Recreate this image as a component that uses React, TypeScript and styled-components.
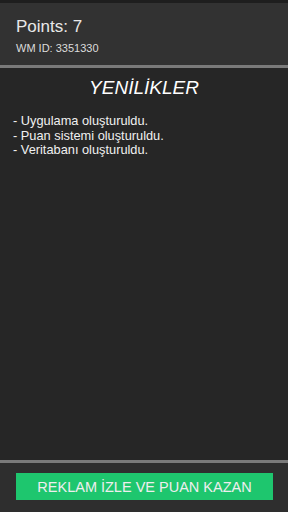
import styled, { createGlobalStyle } from 'styled-components';

const Global = createGlobalStyle`
  html, body {
    margin: 0;
    padding: 0;
    background: #262626;
  }
  #root {
    height: 512px;
  }
`;

const Screen = styled.div`
  width: 288px;
  height: 512px;
  display: flex;
  flex-direction: column;
  background-color: #262626;
  font-family: "Liberation Sans", Arial, sans-serif;
  color: #f2f2f2;
  border-top: 3px solid #1e1e1e;
  box-sizing: border-box;
`;

const Header = styled.div`
  height: 65px;
  padding: 14px 0 0 16px;
  box-sizing: border-box;
  background-color: #323232;
  border-bottom: 3px solid #7a7a7a;
`;

const Points = styled.div`
  font-size: 17px;
  line-height: 20px;
  color: #e8e8e8;
`;

const WmId = styled.div`
  font-size: 11px;
  line-height: 14px;
  margin-top: 4px;
  color: #dcdcdc;
`;

const Content = styled.div`
  flex: 1;
  padding: 8px 13px 0;
`;

const Title = styled.h1`
  margin: 0;
  font-size: 19px;
  font-weight: 400;
  font-style: italic;
  text-align: center;
  line-height: 24px;
  color: #ffffff;
`;

const List = styled.div`
  margin-top: 14px;
  font-size: 12.8px;
  line-height: 14.7px;
  color: #f0f0f0;
`;

const Footer = styled.div`
  height: 52px;
  box-sizing: border-box;
  border-top: 3px solid #7a7a7a;
  background-color: #2e2e2e;
  padding: 10px 15px 0 16px;
`;

const Button = styled.button`
  width: 257px;
  height: 27px;
  border: none;
  background-color: #1ec66e;
  color: #eeeeee;
  font-family: "Liberation Sans", Arial, sans-serif;
  font-size: 14.5px;
  padding: 0;
  cursor: pointer;
`;

const items = [
  '- Uygulama oluşturuldu.',
  '- Puan sistemi oluşturuldu.',
  '- Veritabanı oluşturuldu.',
];

const App = () => {
  return (
    <>
      <Global />
      <Screen>
        <Header>
          <Points>Points: 7</Points>
          <WmId>WM ID: 3351330</WmId>
        </Header>
        <Content>
          <Title>YENİLİKLER</Title>
          <List>
            {items.map((item) => (
              <div key={item}>{item}</div>
            ))}
          </List>
        </Content>
        <Footer>
          <Button>REKLAM İZLE VE PUAN KAZAN</Button>
        </Footer>
      </Screen>
    </>
  );
};

export default App;
